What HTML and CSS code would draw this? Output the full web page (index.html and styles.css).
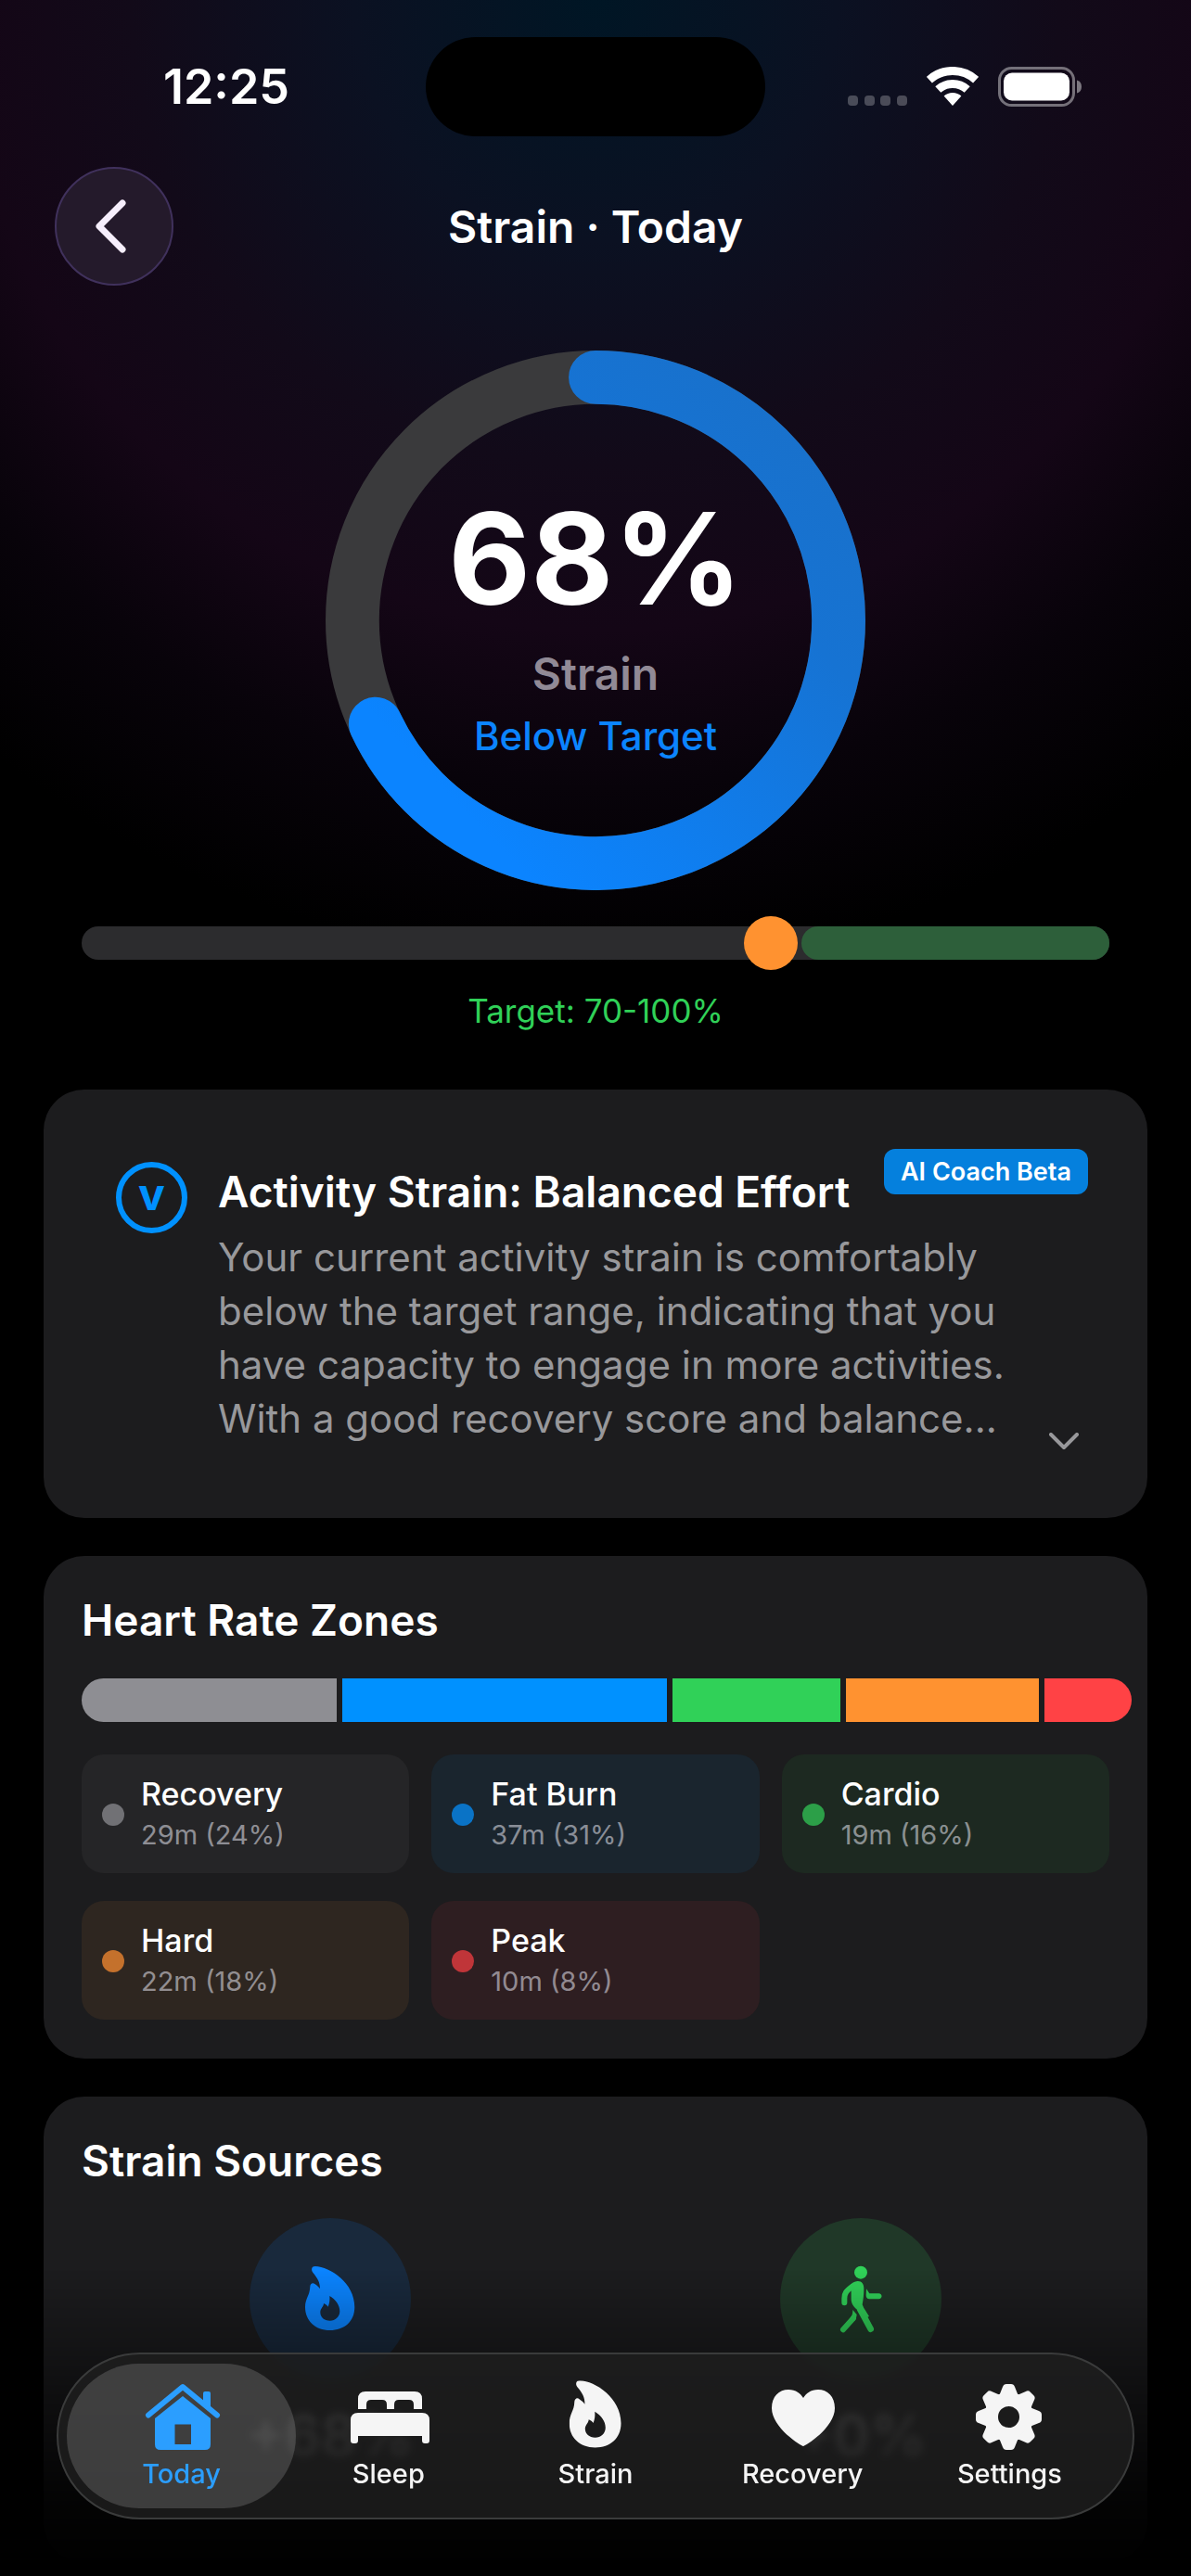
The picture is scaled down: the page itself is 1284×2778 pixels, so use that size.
FILE: index.html
```html
<!DOCTYPE html>
<html lang="en">
<head>
    <meta charset="UTF-8">
    <meta name="viewport" content="width=device-width, initial-scale=1.0">
    <title>Strain · Today</title>
    <link rel="stylesheet" href="styles.css">
</head>
<body>
    <!-- Shared icons -->
    <svg class="sprite" aria-hidden="true">
        <symbol id="flame" viewBox="0 0 54 70">
            <path fill-rule="evenodd" d="M10.7 0C27 .5 53.3 18 53.3 44C53.3 59.7 42 69 26.7 69C10.7 69 0 58.7 0 44C0 34.7 5 31.5 5.3 22C5.3 19 8 17 10.3 19C13 20.8 15 22.5 16 24.3C16 17 13.5 13 8.3 6.7C6 3.5 7 0 10.7 0ZM26.3 32C33 36 37.3 42 37.3 48.5C37.3 54.5 32.5 58.7 26.7 58.7C20.5 58.7 16.3 55 16.3 49.5C16.3 45.5 20 43.5 20 40C22 40.7 23.5 42 24.7 43.7C26.3 40 26.7 36 26.3 32Z"/>
        </symbol>
    </svg>

    <div class="status-bar">
        <span class="time">12:25</span>
        <span class="island"></span>
        <span class="status-icons">
            <svg width="64" height="43" viewBox="0 0 64 43" fill="#fff" opacity=".25">
                <rect y="31" width="11" height="11" rx="4"/>
                <rect x="18" y="31" width="11" height="11" rx="4"/>
                <rect x="35" y="31" width="11" height="11" rx="4"/>
                <rect x="53" y="31" width="11" height="11" rx="4"/>
            </svg>
            <svg width="56" height="43" viewBox="0 0 56 43">
                <path fill="none" stroke="#fff" stroke-width="9" d="M2.9 14.1A37.5 37.5 0 0 1 53.1 14.1M12.3 24.5A23.5 23.5 0 0 1 43.7 24.5"/>
                <path fill="#fff" d="M28 42L18.6 31.6A14 14 0 0 1 37.4 31.6Z"/>
            </svg>
            <svg width="90" height="43" viewBox="0 0 90 43">
                <rect x="1.5" y="1.5" width="80" height="40" rx="13" fill="none" stroke="#fff" stroke-opacity=".42" stroke-width="3"/>
                <rect x="6" y="6.500" width="71" height="30" rx="9" fill="#fff"/>
                <path fill="#fff" fill-opacity=".45" d="M85 14.500C88.500 15.500 90 18 90 21.500C90 25 88.500 27.500 85 28.500Z"/>
            </svg>
        </span>
    </div>

    <header class="nav">
        <button class="back" aria-label="Back">
            <svg width="34" height="58" viewBox="0 0 34 58"><path d="M30 4L5 29L30 54"/></svg>
        </button>
        <h1>Strain · Today</h1>
    </header>

    <main>
        <!-- Strain ring -->
        <section class="ring">
            <svg viewBox="0 0 584 584">
                <defs>
                    <linearGradient id="ring-fill" x1="1" y1="0" x2="0" y2="1">
                        <stop offset="0" stop-color="#1a70c8"/>
                        <stop offset=".3" stop-color="#1673d3"/>
                        <stop offset=".85" stop-color="#0b84ff"/>
                    </linearGradient>
                </defs>
                <circle cx="292" cy="292" r="263" fill="none" stroke="#3a3a3c" stroke-width="58"/>
                <path d="M292 29A263 263 0 1 1 54 404" fill="none" stroke="url(#ring-fill)" stroke-width="58" stroke-linecap="round"/>
            </svg>
            <div class="ring-text">
                <strong>68%</strong>
                <span class="ring-label">Strain</span>
                <span class="ring-state">Below Target</span>
            </div>
        </section>

        <div class="target">
            <div class="target-track">
                <div class="target-zone" style="width: 30%"></div>
                <input type="range" id="strain-range" min="0" max="100" value="68">
            </div>
            <label for="strain-range">Target: 70-100%</label>
        </div>

        <!-- AI coach -->
        <section class="card coach">
            <span class="coach-logo">v</span>
            <div class="coach-text">
                <h2>Activity Strain: Balanced Effort</h2>
                <p>Your current activity strain is comfortably below the target range, indicating that you have capacity to engage in more activities. With a good recovery score and balance...</p>
            </div>
            <button class="expand" aria-label="Show more">
                <svg width="32" height="19" viewBox="0 0 32 19"><path d="M2 2L16 16L30 2"/></svg>
            </button>
            <span class="badge">AI Coach Beta</span>
        </section>

        <!-- Heart rate zones -->
        <section class="card">
            <h2>Heart Rate Zones</h2>
            <div class="zone-bar">
                <span class="seg gray" style="width: 24.8%"></span>
                <span class="seg blue" style="width: 31.6%"></span>
                <span class="seg green" style="width: 16.3%"></span>
                <span class="seg orange" style="width: 18.8%"></span>
                <span class="seg red" style="width: 8.5%"></span>
            </div>
            <ul class="zones">
                <li class="zone gray"><i></i><div><b>Recovery</b><small>29m (24%)</small></div></li>
                <li class="zone blue"><i></i><div><b>Fat Burn</b><small>37m (31%)</small></div></li>
                <li class="zone green"><i></i><div><b>Cardio</b><small>19m (16%)</small></div></li>
                <li class="zone orange"><i></i><div><b>Hard</b><small>22m (18%)</small></div></li>
                <li class="zone red"><i></i><div><b>Peak</b><small>10m (8%)</small></div></li>
            </ul>
        </section>

        <!-- Strain sources -->
        <section class="card">
            <h2>Strain Sources</h2>
            <div class="sources">
                <div class="source">
                    <span class="source-icon active-energy"><svg width="54" height="70"><use href="#flame"/></svg></span>
                    <strong>+68%</strong>
                </div>
                <div class="source">
                    <span class="source-icon walking">
                        <svg width="47" height="73" viewBox="45 37 141 219" fill="none" stroke="#30d158" stroke-linecap="round" stroke-linejoin="round">
                            <circle cx="114" cy="60" r="21" fill="#30d158" stroke="none"/>
                            <path fill="#30d158" stroke="none" d="M74 108C84 94 94 88 104 88C118 88 124 98 124 112C124 132 122 148 119 164C124 178 134 190 141 202L124 210L104 182C88 168 83 160 83 144L83 120Z"/>
                            <path stroke-width="18" d="M88 104C66 120 61 128 61 144V158"/>
                            <path stroke-width="20" d="M112 180L146 243"/>
                            <path stroke-width="18" d="M90 208L57 245"/>
                            <path fill="#30d158" stroke="none" d="M88 181L101 196C100 206 98 210 95 216L80 206C86 199 88 194 88 181Z"/>
                            <path fill="#30d158" stroke="none" d="M132 113L142 128H172C185 128 185 146 172 146H142C134 146 131 140 131 134Z"/>
                        </svg>
                    </span>
                    <strong>+0%</strong>
                </div>
            </div>
        </section>
    </main>

    <div class="fade"></div>

    <nav class="tabs">
        <a class="tab active" href="#today">
            <svg viewBox="0 0 90 80">
                <path fill="none" stroke="currentColor" stroke-width="6" stroke-linecap="round" stroke-linejoin="round" d="M9 38.500L46 8L83 38.500"/>
                <path d="M68 27V15Q68 13 70 13H74Q76 13 76 15V34Z"/>
                <path fill-rule="evenodd" d="M46 18L76 42V70Q76 76 70 76H22Q16 76 16 70V42ZM37.500 48.500H55V70H37.500Z"/>
            </svg>
            Today
        </a>
        <a class="tab" href="#sleep">
            <svg viewBox="0 0 90 80">
                <path d="M12 32V21Q12 13 20 13H73Q81 13 81 21V32H72V27Q72 22 67 22H56Q51 22 51 27V32H43V27Q43 22 38 22H26Q21 22 21 27V32Z"/>
                <path d="M4 66V44Q4 36 12 36H81Q89 36 89 44V66Q89 69 86 69H84Q81 69 81 66V61H12V66Q12 69 9 69H7Q4 69 4 66Z"/>
            </svg>
            Sleep
        </a>
        <a class="tab" href="#strain">
            <svg viewBox="-16 -1 86 76"><use href="#flame" width="54" height="70"/></svg>
            Strain
        </a>
        <a class="tab" href="#recovery">
            <svg viewBox="0 0 90 80">
                <path d="M46 72C44 72 12 52 12 31C12 18 20 11 30 11C38 11 43 15 46 20C49 15 54 11 62 11C72 11 80 18 80 31C80 52 48 72 46 72Z"/>
            </svg>
            Recovery
        </a>
        <a class="tab" href="#settings">
            <svg viewBox="0 0 90 80">
                <defs>
                    <path id="tooth" d="M34 18L38 8Q39 5 42 5H47Q50 5 51 8L55 18Z"/>
                </defs>
                <circle cx="44.500" cy="40.500" r="19" fill="none" stroke="currentColor" stroke-width="15"/>
                <use href="#tooth"/>
                <use href="#tooth" transform="rotate(45 44.500 40.500)"/>
                <use href="#tooth" transform="rotate(90 44.500 40.500)"/>
                <use href="#tooth" transform="rotate(135 44.500 40.500)"/>
                <use href="#tooth" transform="rotate(180 44.500 40.500)"/>
                <use href="#tooth" transform="rotate(225 44.500 40.500)"/>
                <use href="#tooth" transform="rotate(270 44.500 40.500)"/>
                <use href="#tooth" transform="rotate(315 44.500 40.500)"/>
            </svg>
            Settings
        </a>
    </nav>
</body>
</html>
```
FILE: styles.css
```css
* {
    box-sizing: border-box;
    margin: 0;
    padding: 0;
}

body {
    min-height: 100vh;
    background: radial-gradient(circle at 50% 0, #001625 0, #0b1122 260px, #120a19 500px, #140616 680px, #08030a 850px, #000 1040px) #000 no-repeat;
    color: white;
    font-family: Inter, 'Liberation Sans', sans-serif;
}

button {
    border: none;
    background: none;
    cursor: pointer;
}

svg {
    display: block;
}

.sprite {
    position: absolute;
    width: 0;
    height: 0;
}

/* Status bar */
.status-bar {
    display: grid;
    grid-template-columns: 1fr 366px 1fr;
    align-items: center;
    justify-items: center;
    padding: 40px 29px 0;
}

.time {
    font-size: 52px;
    font-weight: 600;
}

.island {
    width: 100%;
    height: 107px;
    border-radius: 54px;
    background: black;
}

.status-icons {
    display: flex;
    gap: 21px;
}

/* Title row */
.nav {
    display: grid;
    grid-template-columns: 1fr auto 1fr;
    align-items: center;
    padding: 33px 59px 0;
}

.nav h1 {
    font-size: 48px;
    font-weight: 600;
}

.back {
    display: flex;
    align-items: center;
    justify-content: center;
    width: 128px;
    height: 128px;
    padding-right: 8px;
    border: 2px solid #40315c;
    border-radius: 50%;
    background: #241a2b;
}

.back path {
    fill: none;
    stroke: #f6eefc;
    stroke-width: 7;
    stroke-linecap: round;
    stroke-linejoin: round;
}

main {
    padding: 0 47px 13px;
}

/* Ring */
.ring {
    position: relative;
    width: 582px;
    margin: 70px auto 28px;
}

.ring-text {
    position: absolute;
    inset: 0;
    display: flex;
    flex-direction: column;
    align-items: center;
    justify-content: center;
}

.ring-text strong {
    font-size: 137px;
    font-weight: 700;
    line-height: 168px;
}

.ring-label {
    color: #918a96;
    font-size: 48px;
    font-weight: 600;
    line-height: 82px;
}

.ring-state {
    color: #0b84ff;
    font-size: 42px;
    font-weight: 500;
    line-height: 52px;
}

/* Target slider */
.target {
    padding: 0 41px;
    margin-bottom: 63px;
    text-align: center;
}

.target-track {
    position: relative;
    display: flex;
    justify-content: flex-end;
    height: 36px;
    margin: 39px 0 33px;
    border-radius: 18px;
    background: #2c2c2e;
}

.target-zone {
    border-radius: 18px;
    background: #2d5f3a;
}

.target input {
    position: absolute;
    inset: 0;
    width: 100%;
    background: none;
    appearance: none;
}

.target input::-webkit-slider-thumb {
    appearance: none;
    width: 58px;
    height: 58px;
    border-radius: 50%;
    background: #ff9230;
}

.target label {
    display: block;
    color: #30d158;
    font-size: 35px;
    line-height: 44px;
}

/* Cards */
.card {
    position: relative;
    margin-bottom: 41px;
    padding: 42px 41px;
    border-radius: 44px;
    background: #1c1c1e;
}

.card:last-child {
    margin-bottom: 0;
    padding-bottom: 102px;
}

.card h2 {
    font-size: 46px;
    font-weight: 600;
    line-height: 54px;
}

.coach {
    display: grid;
    grid-template-columns: 77px 1fr 32px;
    gap: 33px;
    padding: 78px 74px 73px 78px;
}

.coach-logo {
    display: flex;
    align-items: center;
    justify-content: center;
    width: 77px;
    height: 77px;
    padding-bottom: 8px;
    border: 6px solid #0091ff;
    border-radius: 50%;
    color: #0091ff;
    font-size: 48px;
    font-weight: 700;
}

.coach-text {
    padding-bottom: 5px;
}

.coach h2 {
    margin-bottom: 10px;
    line-height: 64px;
    white-space: nowrap;
}

.coach p {
    color: #98989b;
    font-size: 42px;
    line-height: 58px;
}

.expand {
    align-self: end;
}

.expand path {
    fill: none;
    stroke: #98989b;
    stroke-width: 4;
    stroke-linecap: round;
    stroke-linejoin: round;
}

.badge {
    position: absolute;
    top: 64px;
    right: 64px;
    padding: 0 18px;
    border-radius: 12px;
    background: #0580dd;
    font-size: 27px;
    font-weight: 600;
    line-height: 49px;
}

/* Zones */
.gray { --color: #8e8e93; --tint: #252527; --dot: #717175; }
.blue { --color: #0091ff; --tint: #1a252e; --dot: #0a73c6; }
.green { --color: #30d158; --tint: #1d2921; --dot: #2c9f48; }
.orange { --color: #ff9230; --tint: #2e2620; --dot: #c4712c; }
.red { --color: #ff4245; --tint: #2e1e21; --dot: #c03539; }

.zone-bar {
    display: flex;
    gap: 6px;
    height: 47px;
    margin: 36px 0 35px;
}

.seg {
    flex: none;
    background: var(--color);
}

.seg:first-child {
    border-radius: 24px 0 0 24px;
}

.seg:last-child {
    border-radius: 0 24px 24px 0;
}

.zones {
    display: grid;
    grid-template-columns: repeat(3, 1fr);
    gap: 30px 24px;
    list-style: none;
}

.zone {
    display: flex;
    align-items: center;
    gap: 18px;
    padding: 21px 22px 19px;
    border-radius: 24px;
    background: var(--tint);
}

.zone i {
    width: 24px;
    height: 24px;
    border-radius: 50%;
    background: var(--dot);
}

.zone b,
.zone small {
    display: block;
    line-height: 44px;
}

.zone b {
    font-size: 34px;
    font-weight: 500;
}

.zone small {
    color: rgba(235, 235, 245, 0.55);
    font-size: 29px;
}

/* Sources */
.sources {
    display: grid;
    grid-template-columns: 1fr 1fr;
    gap: 36px;
    margin-top: 35px;
}

.source {
    display: flex;
    flex-direction: column;
    align-items: center;
    gap: 24px;
}

.source-icon {
    display: flex;
    align-items: center;
    justify-content: center;
    width: 174px;
    height: 174px;
    border-radius: 50%;
}

.active-energy {
    background: #19293c;
    fill: #0b84ff;
}

.walking {
    background: #203828;
}

.source strong {
    font-size: 60px;
    font-weight: 700;
    line-height: 72px;
}

.fade {
    position: fixed;
    right: 0;
    bottom: 0;
    left: 0;
    height: 330px;
    background: linear-gradient(transparent, rgba(0, 0, 0, 0.4) 35%, rgba(0, 0, 0, 0.86) 75%, #000);
    pointer-events: none;
}

/* Tab bar */
.tabs {
    position: fixed;
    right: 61px;
    bottom: 61px;
    left: 61px;
    display: flex;
    padding: 10px 21px;
    border: 2px solid #3a3b3b;
    border-radius: 90px;
    background: rgba(30, 30, 30, 0.82);
    backdrop-filter: blur(4px);
}

.tab {
    position: relative;
    display: flex;
    flex: 1;
    flex-direction: column;
    align-items: center;
    height: 156px;
    padding-top: 17px;
    color: #f5f5f5;
    font-size: 29px;
    font-weight: 500;
    line-height: 44px;
    text-decoration: none;
}

.tab svg {
    z-index: 1;
    width: 90px;
    height: 80px;
    fill: currentColor;
}

.active {
    z-index: 0;
    color: #2b9eff;
}

.active::before {
    content: '';
    position: absolute;
    z-index: -1;
    inset: 0 -12px;
    border-radius: 78px;
    background: rgba(255, 255, 255, 0.16);
}
```
